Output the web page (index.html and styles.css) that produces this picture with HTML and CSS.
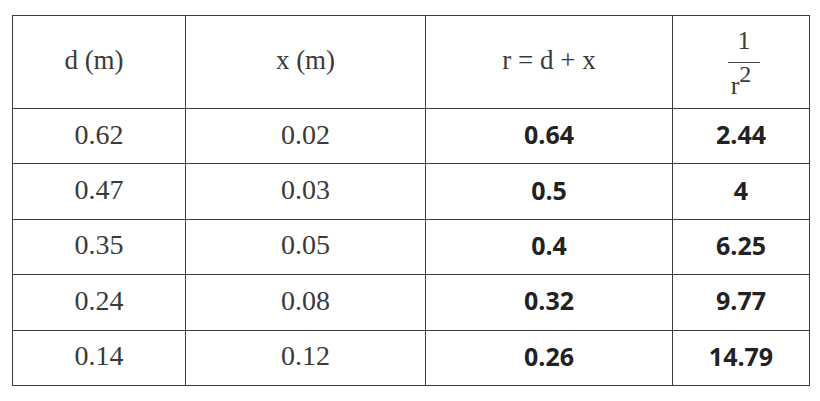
FILE: index.html
```html
<!DOCTYPE html>
<html>
<head>
<meta charset="utf-8">
<link rel="stylesheet" href="styles.css">
</head>
<body>
<div class="page">
<table class="data">
  <colgroup>
    <col class="c1"><col class="c2"><col class="c3"><col class="c4">
  </colgroup>
  <thead>
    <tr class="head">
      <th class="first">d (m)</th>
      <th>x (m)</th>
      <th class="formula">r = d + x</th>
      <th>
        <span class="frac">
          <span class="num">1</span>
          <span class="den">r<sup>2</sup></span>
        </span>
      </th>
    </tr>
  </thead>
  <tbody>
    <tr><td>0.62</td><td>0.02</td><td class="b">0.64</td><td class="b">2.44</td></tr>
    <tr><td>0.47</td><td>0.03</td><td class="b">0.5</td><td class="b">4</td></tr>
    <tr><td>0.35</td><td>0.05</td><td class="b">0.4</td><td class="b">6.25</td></tr>
    <tr><td>0.24</td><td>0.08</td><td class="b">0.32</td><td class="b">9.77</td></tr>
    <tr><td>0.14</td><td>0.12</td><td class="b">0.26</td><td class="b">14.79</td></tr>
  </tbody>
</table>
</div>
</body>
</html>
```

FILE: styles.css
```css
html, body {
  margin: 0;
  padding: 0;
  background: #ffffff;
}
.page {
  padding: 15px 0 0 12px;
}
.data {
  border-collapse: collapse;
  width: 797px;
  table-layout: fixed;
  font-family: "Liberation Serif", "Times New Roman", serif;
  color: #3a3a3a;
}
.c1 { width: 173px; }
.c2 { width: 240px; }
.c3 { width: 247px; }
.c4 { width: 137px; }
.data th, .data td {
  border: 1px solid #3c3c3c;
  text-align: center;
  vertical-align: middle;
  padding: 0;
  font-weight: normal;
  font-size: 27px;
}
.head { height: 93px; }
.head th { padding-bottom: 4px; }
.head th.first { padding-right: 10px; }
.data tbody tr { height: 55.4px; }
.data td { padding-bottom: 3px; font-size: 28px; }
.data td.b {
  font-family: "Open Sans", "Noto Sans", sans-serif;
  font-weight: 700;
  font-size: 25px;
  color: #222222;
  padding-bottom: 4px;
}
.formula { font-size: 25.5px; padding-right: 28px; }
.frac {
  display: inline-flex;
  flex-direction: column;
  align-items: center;
  font-size: 26px;
  line-height: 1;
  margin-left: 6px;
  margin-top: 6px;
}
.frac .num {
  border-bottom: 1px solid #444;
  padding: 0 1px 8px 1px;
  width: 30px;
}
.frac .den {
  padding-top: 10px;
  padding-right: 6px;
}
.frac sup {
  font-size: 24px;
  vertical-align: 12px;
  line-height: 0;
}
```
